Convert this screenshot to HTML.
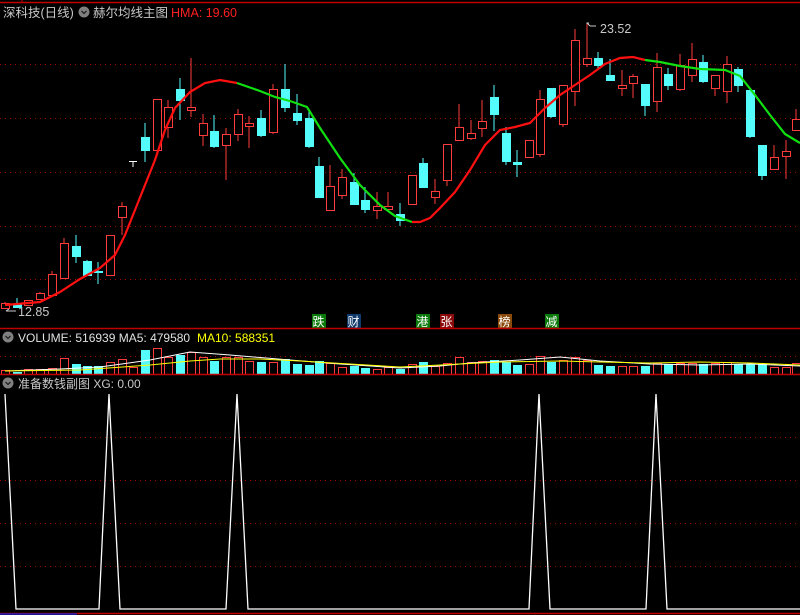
<!DOCTYPE html>
<html><head><meta charset="utf-8"><style>
html,body{margin:0;padding:0;background:#000;width:800px;height:615px;overflow:hidden}
svg{display:block}
text{font-family:"Liberation Sans","Noto Sans CJK SC",sans-serif;font-size:12.5px}
#candles,#vol{shape-rendering:crispEdges}
.r{fill:#000;stroke:#ff3c3c;stroke-width:1}
.c{fill:#54fcfc;stroke:#54fcfc;stroke-width:1}
.wr{stroke:#ff3c3c;stroke-width:1}
.wc{stroke:#54fcfc;stroke-width:1}
.dot{stroke:#a00000;stroke-width:1;stroke-dasharray:1 4}
</style></head><body>
<svg width="800" height="615" xmlns="http://www.w3.org/2000/svg">
<rect width="800" height="615" fill="#000"/>
<line x1="0" y1="2.5" x2="800" y2="2.5" stroke="#c00000" stroke-width="1.5"/>
<line x1="22" y1="0" x2="22" y2="3" stroke="#c00000"/>
<g class="dot">
<line x1="0" y1="64.5" x2="800" y2="64.5"/><line x1="0" y1="118.5" x2="800" y2="118.5"/>
<line x1="0" y1="172.5" x2="800" y2="172.5"/><line x1="0" y1="226.5" x2="800" y2="226.5"/>
<line x1="0" y1="279.5" x2="800" y2="279.5"/><line x1="0" y1="356.5" x2="800" y2="356.5"/>
<line x1="0" y1="437.5" x2="800" y2="437.5"/><line x1="0" y1="480.5" x2="800" y2="480.5"/>
<line x1="0" y1="523.5" x2="800" y2="523.5"/><line x1="0" y1="566.5" x2="800" y2="566.5"/>
</g>
<text x="3" y="17" fill="#c8c8c8">深科技(日线)</text>
<circle cx="84" cy="12" r="5.5" fill="#808080"/><path d="M81.5 11l2.5 2.5 2.5-2.5" stroke="#222" fill="none" stroke-width="1.3"/>
<text x="93" y="17" fill="#c8c8c8">赫尔均线主图</text>
<text x="171" y="17" fill="#ff2020">HMA: 19.60</text>
<text x="600" y="33" fill="#c8c8c8">23.52</text>
<path d="M587 28v-5h2M587 23l3 3M590 26h6" stroke="#c8c8c8" fill="none" stroke-width="1"/>
<text x="18" y="316" fill="#c8c8c8">12.85</text>
<path d="M6 311h10M6 311l3-2" stroke="#c8c8c8" fill="none"/>
<g id="candles">
<line class="wr" x1="5" y1="302" x2="5" y2="309"/><rect class="r" x="1.5" y="303.5" width="8" height="5"/>
<line class="wc" x1="17" y1="298" x2="17" y2="307"/><rect class="c" x="13.5" y="304.5" width="8" height="3"/>
<line class="wr" x1="28" y1="300" x2="28" y2="306"/><rect class="r" x="24.5" y="300.5" width="8" height="5"/>
<line class="wr" x1="40" y1="292" x2="40" y2="300"/><rect class="r" x="36.5" y="293.5" width="8" height="6"/>
<line class="wr" x1="52" y1="271" x2="52" y2="296"/><rect class="r" x="48.5" y="274.5" width="8" height="21"/>
<line class="wr" x1="64" y1="238" x2="64" y2="279"/><rect class="r" x="60.5" y="243.5" width="8" height="35"/>
<line class="wc" x1="76" y1="235" x2="76" y2="263"/><rect class="c" x="72.5" y="246.5" width="8" height="10"/>
<line class="wc" x1="87" y1="260" x2="87" y2="276"/><rect class="c" x="83.5" y="261.5" width="8" height="14"/>
<line class="wc" x1="98" y1="262" x2="98" y2="284"/><rect class="c" x="94.5" y="271.5" width="8" height="1"/>
<line class="wr" x1="110" y1="235" x2="110" y2="275"/><rect class="r" x="106.5" y="235.5" width="8" height="40"/>
<line class="wr" x1="122" y1="202" x2="122" y2="235"/><rect class="r" x="118.5" y="206.5" width="8" height="11"/>
<line stroke="#fff" x1="133" y1="161" x2="133" y2="167"/><line stroke="#fff" x1="129" y1="161.5" x2="137" y2="161.5"/>
<line class="wc" x1="145" y1="123" x2="145" y2="162"/><rect class="c" x="141.5" y="137.5" width="8" height="13"/>
<line class="wr" x1="157" y1="99" x2="157" y2="150"/><rect class="r" x="153.5" y="99.5" width="8" height="51"/>
<line class="wr" x1="168" y1="100" x2="168" y2="138"/><rect class="r" x="164.5" y="107.5" width="8" height="20"/>
<line class="wc" x1="180" y1="78" x2="180" y2="120"/><rect class="c" x="176.5" y="89.5" width="8" height="11"/>
<line class="wr" x1="191" y1="58" x2="191" y2="117"/><rect class="r" x="187.5" y="107.5" width="8" height="3"/>
<line class="wr" x1="203" y1="114" x2="203" y2="146"/><rect class="r" x="199.5" y="123.5" width="8" height="12"/>
<line class="wc" x1="214" y1="115" x2="214" y2="148"/><rect class="c" x="210.5" y="131.5" width="8" height="15"/>
<line class="wr" x1="226" y1="128" x2="226" y2="180"/><rect class="r" x="222.5" y="134.5" width="8" height="11"/>
<line class="wr" x1="238" y1="109" x2="238" y2="141"/><rect class="r" x="234.5" y="114.5" width="8" height="20"/>
<line class="wr" x1="249" y1="116" x2="249" y2="148"/><rect class="r" x="245.5" y="123.5" width="8" height="3"/>
<line class="wc" x1="261" y1="110" x2="261" y2="137"/><rect class="c" x="257.5" y="118.5" width="8" height="17"/>
<line class="wr" x1="273" y1="84" x2="273" y2="134"/><rect class="r" x="269.5" y="89.5" width="8" height="43"/>
<line class="wc" x1="285" y1="64" x2="285" y2="112"/><rect class="c" x="281.5" y="89.5" width="8" height="18"/>
<line class="wc" x1="297" y1="94" x2="297" y2="125"/><rect class="c" x="293.5" y="113.5" width="8" height="7"/>
<line class="wc" x1="309" y1="110" x2="309" y2="148"/><rect class="c" x="305.5" y="118.5" width="8" height="28"/>
<line class="wc" x1="319" y1="157" x2="319" y2="198"/><rect class="c" x="315.5" y="166.5" width="8" height="31"/>
<line class="wr" x1="330" y1="165" x2="330" y2="211"/><rect class="r" x="326.5" y="186.5" width="8" height="24"/>
<line class="wr" x1="342" y1="169" x2="342" y2="199"/><rect class="r" x="338.5" y="177.5" width="8" height="18"/>
<line class="wc" x1="354" y1="173" x2="354" y2="205"/><rect class="c" x="350.5" y="182.5" width="8" height="22"/>
<line class="wc" x1="365" y1="187" x2="365" y2="213"/><rect class="c" x="361.5" y="200.5" width="8" height="9"/>
<line class="wr" x1="377" y1="192" x2="377" y2="219"/><rect class="r" x="373.5" y="206.5" width="8" height="4"/>
<line class="wr" x1="388" y1="192" x2="388" y2="210"/><rect class="r" x="384.5" y="206.5" width="8" height="3"/>
<line class="wc" x1="400" y1="203" x2="400" y2="226"/><rect class="c" x="396.5" y="214.5" width="8" height="6"/>
<line class="wr" x1="412" y1="175" x2="412" y2="205"/><rect class="r" x="408.5" y="175.5" width="8" height="29"/>
<line class="wc" x1="423" y1="158" x2="423" y2="188"/><rect class="c" x="419.5" y="163.5" width="8" height="24"/>
<line class="wr" x1="435" y1="179" x2="435" y2="204"/><rect class="r" x="431.5" y="191.5" width="8" height="6"/>
<line class="wr" x1="447" y1="144" x2="447" y2="186"/><rect class="r" x="443.5" y="144.5" width="8" height="36"/>
<line class="wr" x1="459" y1="104" x2="459" y2="140"/><rect class="r" x="455.5" y="127.5" width="8" height="13"/>
<line class="wr" x1="471" y1="120" x2="471" y2="140"/><rect class="r" x="467.5" y="133.5" width="8" height="5"/>
<line class="wr" x1="482" y1="100" x2="482" y2="137"/><rect class="r" x="478.5" y="121.5" width="8" height="7"/>
<line class="wc" x1="494" y1="85" x2="494" y2="131"/><rect class="c" x="490.5" y="97.5" width="8" height="17"/>
<line class="wc" x1="506" y1="127" x2="506" y2="165"/><rect class="c" x="502.5" y="133.5" width="8" height="28"/>
<line class="wc" x1="517" y1="150" x2="517" y2="177"/><rect class="c" x="513.5" y="162.5" width="8" height="2"/>
<line class="wr" x1="529" y1="140" x2="529" y2="158"/><rect class="r" x="525.5" y="140.5" width="8" height="17"/>
<line class="wr" x1="540" y1="90" x2="540" y2="157"/><rect class="r" x="536.5" y="99.5" width="8" height="55"/>
<line class="wc" x1="551" y1="88" x2="551" y2="118"/><rect class="c" x="547.5" y="88.5" width="8" height="28"/>
<line class="wr" x1="563" y1="85" x2="563" y2="127"/><rect class="r" x="559.5" y="85.5" width="8" height="39"/>
<line class="wr" x1="575" y1="29" x2="575" y2="106"/><rect class="r" x="571.5" y="40.5" width="8" height="51"/>
<line class="wr" x1="587" y1="24" x2="587" y2="67"/><rect class="r" x="583.5" y="58.5" width="8" height="6"/>
<line class="wc" x1="598" y1="52" x2="598" y2="70"/><rect class="c" x="594.5" y="58.5" width="8" height="7"/>
<line class="wc" x1="610" y1="59" x2="610" y2="81"/><rect class="c" x="606.5" y="75.5" width="8" height="5"/>
<line class="wr" x1="622" y1="70" x2="622" y2="96"/><rect class="r" x="618.5" y="85.5" width="8" height="3"/>
<line class="wr" x1="633" y1="74" x2="633" y2="98"/><rect class="r" x="629.5" y="76.5" width="8" height="7"/>
<line class="wc" x1="645" y1="84" x2="645" y2="116"/><rect class="c" x="641.5" y="84.5" width="8" height="21"/>
<line class="wr" x1="657" y1="53" x2="657" y2="112"/><rect class="r" x="653.5" y="67.5" width="8" height="34"/>
<line class="wc" x1="668" y1="68" x2="668" y2="90"/><rect class="c" x="664.5" y="74.5" width="8" height="11"/>
<line class="wr" x1="680" y1="54" x2="680" y2="91"/><rect class="r" x="676.5" y="65.5" width="8" height="24"/>
<line class="wr" x1="692" y1="43" x2="692" y2="82"/><rect class="r" x="688.5" y="59.5" width="8" height="16"/>
<line class="wc" x1="703" y1="55" x2="703" y2="83"/><rect class="c" x="699.5" y="62.5" width="8" height="19"/>
<line class="wr" x1="715" y1="75" x2="715" y2="96"/><rect class="r" x="711.5" y="75.5" width="8" height="13"/>
<line class="wr" x1="727" y1="56" x2="727" y2="103"/><rect class="r" x="723.5" y="64.5" width="8" height="27"/>
<line class="wc" x1="738" y1="67" x2="738" y2="92"/><rect class="c" x="734.5" y="69.5" width="8" height="16"/>
<line class="wc" x1="750" y1="90" x2="750" y2="138"/><rect class="c" x="746.5" y="90.5" width="8" height="46"/>
<line class="wc" x1="762" y1="145" x2="762" y2="180"/><rect class="c" x="758.5" y="145.5" width="8" height="30"/>
<line class="wr" x1="774" y1="145" x2="774" y2="170"/><rect class="r" x="770.5" y="157.5" width="8" height="12"/>
<line class="wr" x1="786" y1="140" x2="786" y2="179"/><rect class="r" x="782.5" y="151.5" width="8" height="5"/>
<line class="wr" x1="796" y1="109" x2="796" y2="130"/><rect class="r" x="792.5" y="119.5" width="8" height="11"/>
</g>
<polyline fill="none" stroke="#ff1010" stroke-width="2.2" points="5,305 40,302 60,292 80,279 100,268 115,255 125,235 135,210 145,185 155,160 165,130 175,108 190,92 205,83 220,80 237,83"/>
<polyline fill="none" stroke="#10e010" stroke-width="2.2" points="237,83 260,91 275,97 290,101 307,107 320,128 340,158 360,185 380,205 395,216 412,222"/>
<polyline fill="none" stroke="#ff1010" stroke-width="2.2" points="412,222 420,222 430,218 440,208 455,192 470,170 485,145 500,130 515,127 530,123 545,108 560,95 575,85 590,75 605,64 620,58 633,57 645,60"/>
<polyline fill="none" stroke="#10e010" stroke-width="2.2" points="645,60 660,62 680,66 700,69 725,70 740,76 755,95 770,115 785,134 800,143"/>
<g>
<rect x="312" y="314" width="14" height="14" fill="#0a7a0a"/><text x="312.5" y="326" fill="#fff" style="font-size:12px">跌</text>
<rect x="347" y="314" width="14" height="14" fill="#103a6a"/><text x="347.5" y="326" fill="#fff" style="font-size:12px">财</text>
<rect x="416" y="314" width="14" height="14" fill="#0a7a0a"/><text x="416.5" y="326" fill="#fff" style="font-size:12px">港</text>
<rect x="440" y="314" width="14" height="14" fill="#8a0a0a"/><text x="440.5" y="326" fill="#fff" style="font-size:12px">张</text>
<rect x="498" y="314" width="14" height="14" fill="#8a4a0a"/><text x="498.5" y="326" fill="#fff" style="font-size:12px">榜</text>
<rect x="545" y="314" width="14" height="14" fill="#0a7a0a"/><text x="545.5" y="326" fill="#fff" style="font-size:12px">减</text>
</g>
<line x1="0" y1="328.5" x2="800" y2="328.5" stroke="#c00000" stroke-width="1.5"/>
<circle cx="8" cy="337" r="5.5" fill="#808080"/><path d="M5.5 336l2.5 2.5 2.5-2.5" stroke="#222" fill="none" stroke-width="1.3"/>
<text x="18" y="342" fill="#e0e0e0" style="font-size:12px">VOLUME: 516939  MA5: 479580</text>
<text x="197" y="342" fill="#ffff00" style="font-size:12px">MA10: 588351</text>
<g id="vol">
<rect class="r" x="1.5" y="370.5" width="8" height="4"/><rect class="c" x="13.5" y="372.5" width="8" height="2"/><rect class="r" x="24.5" y="369.5" width="8" height="5"/><rect class="r" x="36.5" y="369.5" width="8" height="5"/><rect class="r" x="48.5" y="368.5" width="8" height="6"/><rect class="r" x="60.5" y="358.5" width="8" height="16"/><rect class="c" x="72.5" y="364.5" width="8" height="10"/><rect class="c" x="83.5" y="366.5" width="8" height="8"/><rect class="c" x="94.5" y="366.5" width="8" height="8"/><rect class="r" x="106.5" y="362.5" width="8" height="12"/><rect class="r" x="118.5" y="359.5" width="8" height="15"/><rect class="r" x="129.5" y="367.5" width="8" height="7"/><rect class="c" x="141.5" y="350.5" width="8" height="24"/><rect class="r" x="153.5" y="348.5" width="8" height="26"/><rect class="r" x="164.5" y="357.5" width="8" height="17"/><rect class="c" x="176.5" y="355.5" width="8" height="19"/><rect class="r" x="187.5" y="352.5" width="8" height="22"/><rect class="r" x="199.5" y="357.5" width="8" height="17"/><rect class="c" x="210.5" y="361.5" width="8" height="13"/><rect class="r" x="222.5" y="357.5" width="8" height="17"/><rect class="r" x="234.5" y="357.5" width="8" height="17"/><rect class="r" x="245.5" y="361.5" width="8" height="13"/><rect class="c" x="257.5" y="362.5" width="8" height="12"/><rect class="r" x="269.5" y="362.5" width="8" height="12"/><rect class="c" x="281.5" y="359.5" width="8" height="15"/><rect class="c" x="293.5" y="364.5" width="8" height="10"/><rect class="c" x="305.5" y="365.5" width="8" height="9"/><rect class="c" x="315.5" y="361.5" width="8" height="13"/><rect class="r" x="326.5" y="363.5" width="8" height="11"/><rect class="r" x="338.5" y="367.5" width="8" height="7"/><rect class="c" x="350.5" y="366.5" width="8" height="8"/><rect class="c" x="361.5" y="368.5" width="8" height="6"/><rect class="r" x="373.5" y="369.5" width="8" height="5"/><rect class="r" x="384.5" y="367.5" width="8" height="7"/><rect class="c" x="396.5" y="369.5" width="8" height="5"/><rect class="r" x="408.5" y="364.5" width="8" height="10"/><rect class="c" x="419.5" y="362.5" width="8" height="12"/><rect class="r" x="431.5" y="366.5" width="8" height="8"/><rect class="r" x="443.5" y="363.5" width="8" height="11"/><rect class="r" x="455.5" y="357.5" width="8" height="17"/><rect class="r" x="467.5" y="362.5" width="8" height="12"/><rect class="r" x="478.5" y="361.5" width="8" height="13"/><rect class="c" x="490.5" y="360.5" width="8" height="14"/><rect class="c" x="502.5" y="362.5" width="8" height="12"/><rect class="c" x="513.5" y="365.5" width="8" height="9"/><rect class="r" x="525.5" y="364.5" width="8" height="10"/><rect class="r" x="536.5" y="356.5" width="8" height="18"/><rect class="c" x="547.5" y="362.5" width="8" height="12"/><rect class="r" x="559.5" y="360.5" width="8" height="14"/><rect class="r" x="571.5" y="357.5" width="8" height="17"/><rect class="r" x="583.5" y="360.5" width="8" height="14"/><rect class="c" x="594.5" y="365.5" width="8" height="9"/><rect class="c" x="606.5" y="366.5" width="8" height="8"/><rect class="r" x="618.5" y="366.5" width="8" height="8"/><rect class="r" x="629.5" y="366.5" width="8" height="8"/><rect class="c" x="641.5" y="366.5" width="8" height="8"/><rect class="r" x="653.5" y="363.5" width="8" height="11"/><rect class="c" x="664.5" y="364.5" width="8" height="10"/><rect class="r" x="676.5" y="363.5" width="8" height="11"/><rect class="r" x="688.5" y="363.5" width="8" height="11"/><rect class="c" x="699.5" y="364.5" width="8" height="10"/><rect class="r" x="711.5" y="363.5" width="8" height="11"/><rect class="r" x="723.5" y="362.5" width="8" height="12"/><rect class="c" x="734.5" y="364.5" width="8" height="10"/><rect class="c" x="746.5" y="364.5" width="8" height="10"/><rect class="c" x="758.5" y="364.5" width="8" height="10"/><rect class="r" x="770.5" y="367.5" width="8" height="7"/><rect class="r" x="782.5" y="367.5" width="8" height="7"/><rect class="r" x="792.5" y="363.5" width="8" height="11"/>
</g>
<polyline fill="none" stroke="#ffffff" stroke-width="1" points="5,371 60,369 100,367 150,360 190,352 230,355 290,360 340,364 400,368 440,366 470,363 520,360 560,357 600,361 650,364 700,365 750,364 800,366"/>
<polyline fill="none" stroke="#ffff00" stroke-width="1" points="5,371 80,370 150,365 190,361 220,359 260,359 300,361 350,364 400,367 440,365 500,362 560,361 600,362 650,363 700,362 750,363 800,365"/>
<line x1="0" y1="374.5" x2="800" y2="374.5" stroke="#c00000" stroke-width="1.5"/>
<circle cx="8" cy="383" r="5.5" fill="#808080"/><path d="M5.5 382l2.5 2.5 2.5-2.5" stroke="#222" fill="none" stroke-width="1.3"/>
<text x="18" y="388" fill="#c8c8c8" style="font-size:12px">准备数钱副图  XG: 0.00</text>
<polyline fill="none" stroke="#fff" stroke-width="1.3" points="5,394 16,609 99,609 109,394 120,609 226,609 237,394 248,609 529,609 539,394 550,609 646,609 656,394 667,609 800,609"/>
<line x1="0" y1="613.5" x2="800" y2="613.5" stroke="#c00000" stroke-width="1.5"/>
<line x1="0" y1="614" x2="77" y2="614" stroke="#2020c0" stroke-width="1.5"/>
</svg>
</body></html>
